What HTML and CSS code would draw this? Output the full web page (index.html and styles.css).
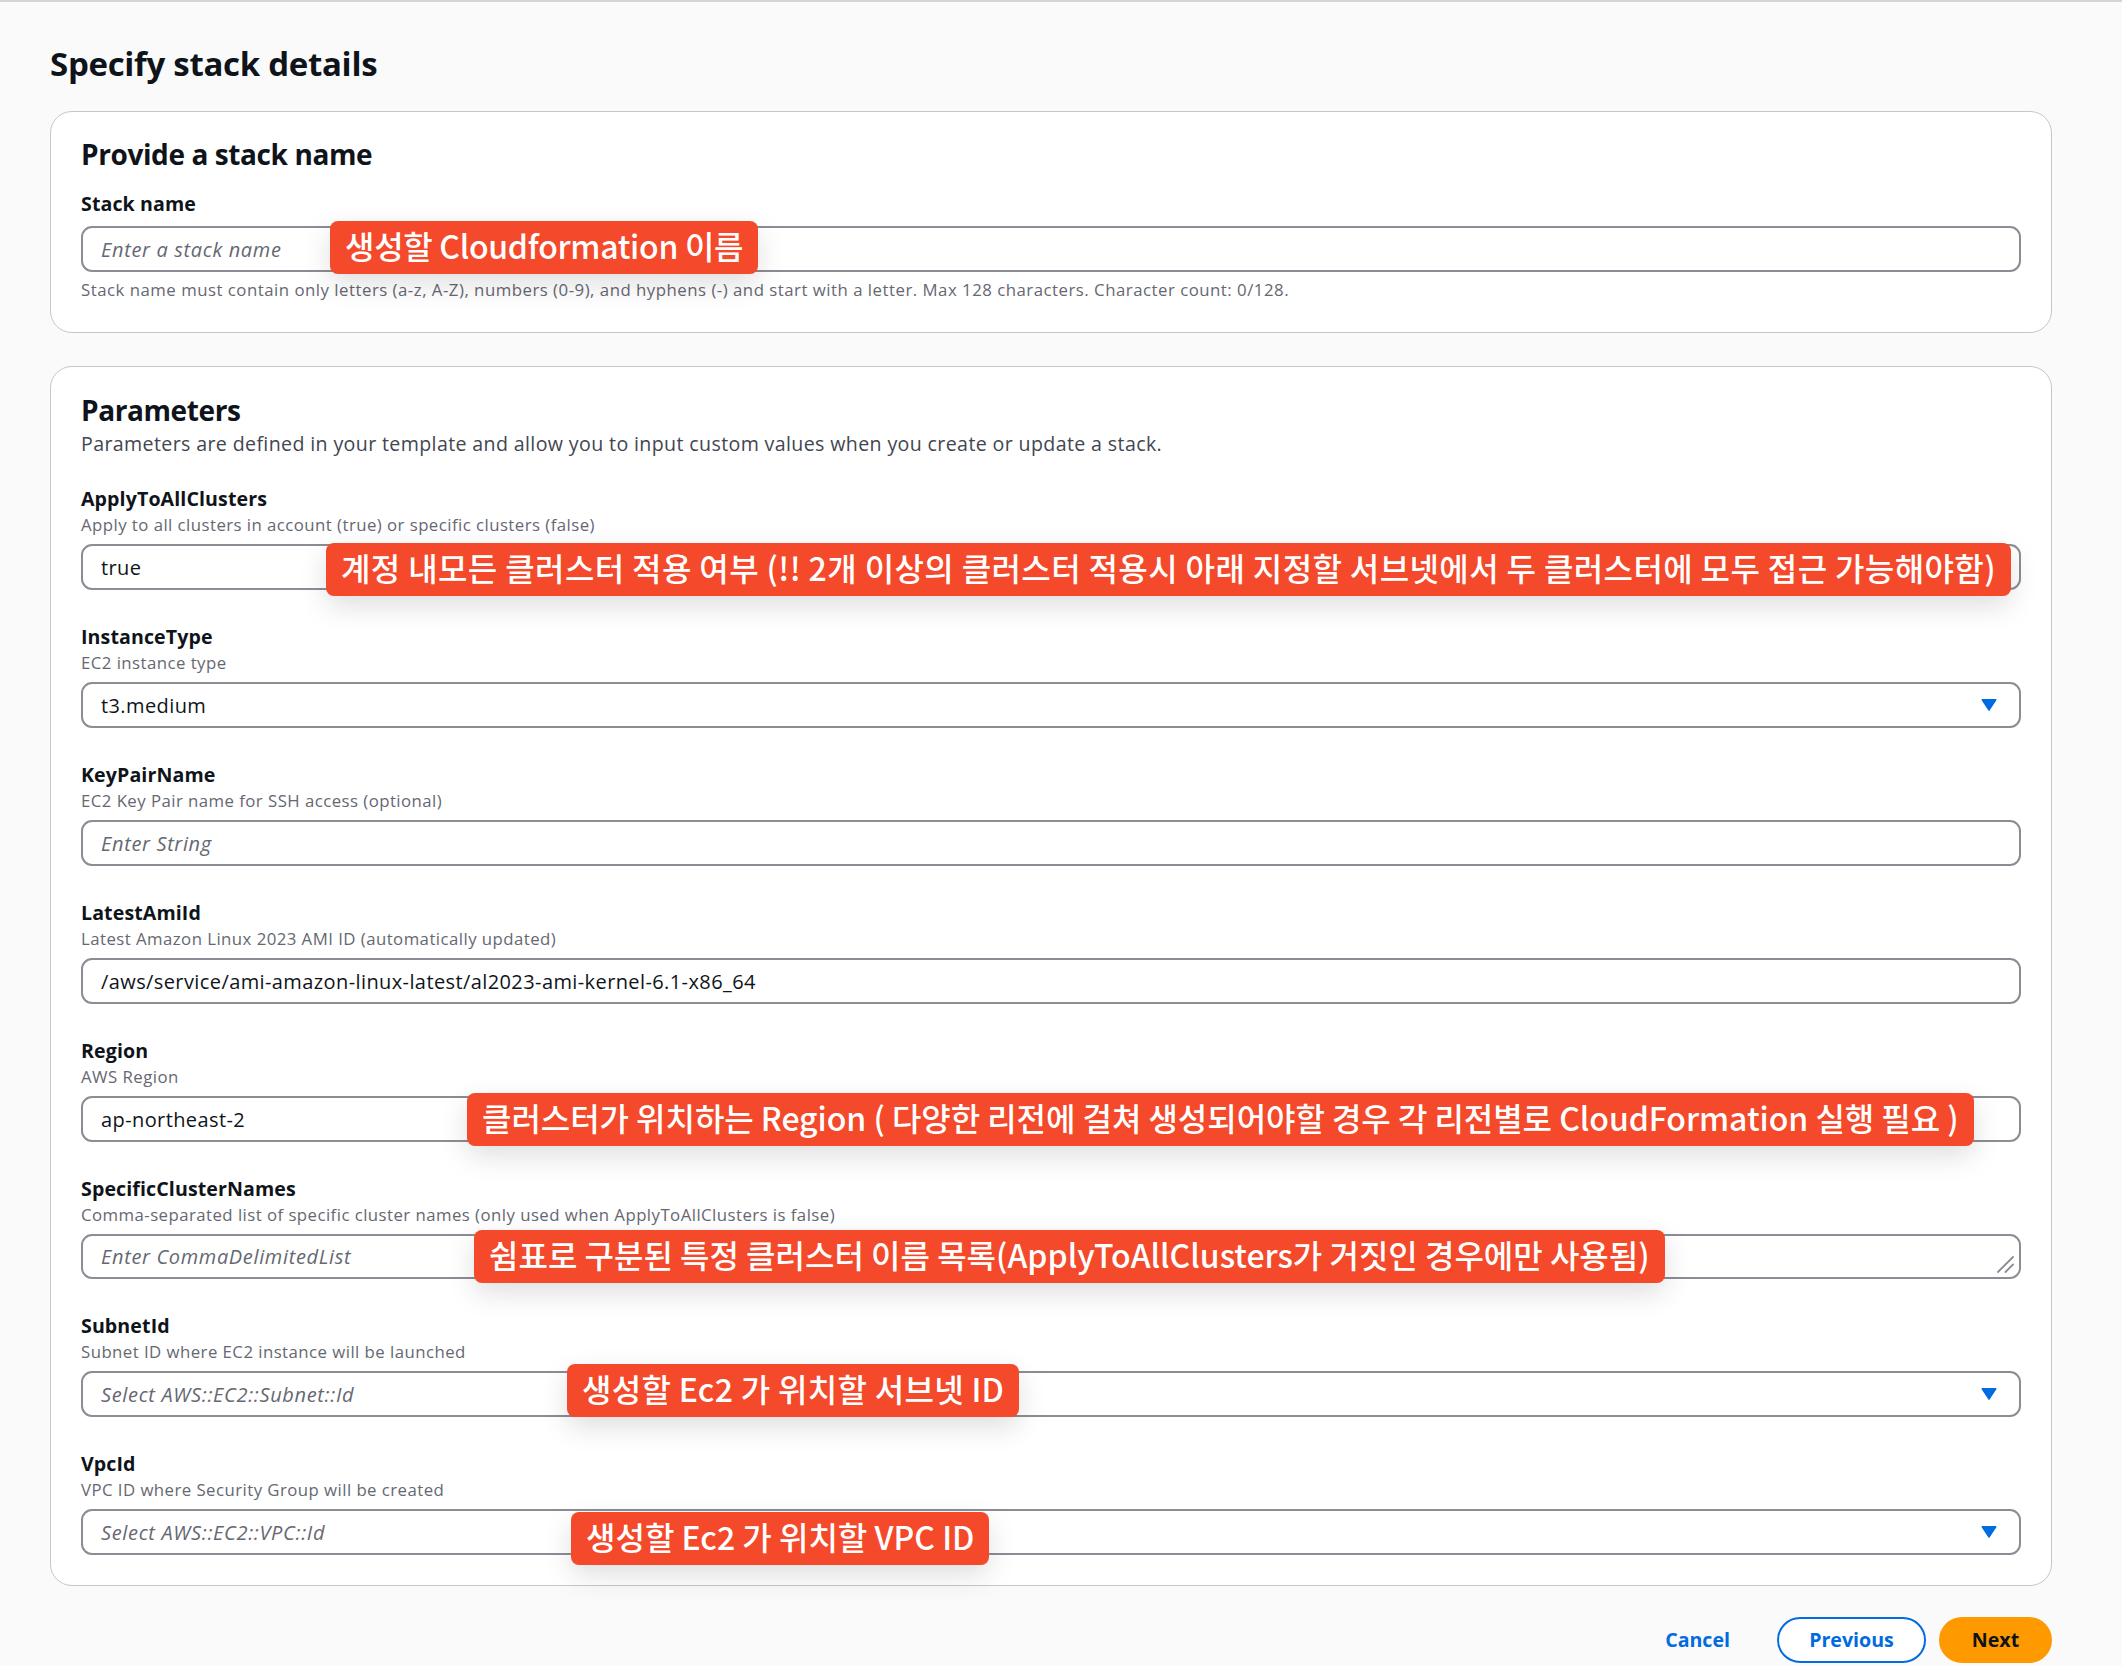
FILE: index.html
```html
<!DOCTYPE html>
<html lang="en">
<head>
<meta charset="utf-8">
<title>Specify stack details</title>
<link rel="stylesheet" href="styles.css">
</head>
<body>
<main class="page">
  <h1 class="title">Specify stack details</h1>

  <section class="card card-name">
    <h2 class="card-title">Provide a stack name</h2>
    <div class="field field-first">
      <div class="label">Stack name</div>
      <div class="control">
        <div class="input placeholder">Enter a stack name</div>
        <div class="note note-1">생성할 Cloudformation 이름</div>
      </div>
      <div class="constraint">Stack name must contain only letters (a-z, A-Z), numbers (0-9), and hyphens (-) and start with a letter. Max 128 characters. Character count: 0/128.</div>
    </div>
  </section>

  <section class="card card-params">
    <h2 class="card-title">Parameters</h2>
    <p class="card-desc">Parameters are defined in your template and allow you to input custom values when you create or update a stack.</p>

    <div class="fields">
      <div class="field">
        <div class="label">ApplyToAllClusters</div>
        <div class="desc">Apply to all clusters in account (true) or specific clusters (false)</div>
        <div class="control">
          <div class="input">true</div>
          <div class="note note-2">계정 내모든 클러스터 적용 여부 (!! 2개 이상의 클러스터 적용시 아래 지정할 서브넷에서 두 클러스터에 모두 접근 가능해야함)</div>
        </div>
      </div>

      <div class="field">
        <div class="label">InstanceType</div>
        <div class="desc">EC2 instance type</div>
        <div class="control">
          <div class="input select"><span>t3.medium</span><svg class="caret" width="16" height="12" viewBox="0 0 16 12"><path d="M1.2 0.8 H14.8 L8 11.2 Z" fill="#006ce0" stroke="#006ce0" stroke-width="1.4" stroke-linejoin="round"/></svg></div>
        </div>
      </div>

      <div class="field">
        <div class="label">KeyPairName</div>
        <div class="desc">EC2 Key Pair name for SSH access (optional)</div>
        <div class="control">
          <div class="input placeholder">Enter String</div>
        </div>
      </div>

      <div class="field">
        <div class="label">LatestAmiId</div>
        <div class="desc">Latest Amazon Linux 2023 AMI ID (automatically updated)</div>
        <div class="control">
          <div class="input">/aws/service/ami-amazon-linux-latest/al2023-ami-kernel-6.1-x86_64</div>
        </div>
      </div>

      <div class="field">
        <div class="label">Region</div>
        <div class="desc">AWS Region</div>
        <div class="control">
          <div class="input">ap-northeast-2</div>
          <div class="note note-3">클러스터가 위치하는 Region ( 다양한 리전에 걸쳐 생성되어야할 경우 각 리전별로 CloudFormation 실행 필요 )</div>
        </div>
      </div>

      <div class="field">
        <div class="label">SpecificClusterNames</div>
        <div class="desc">Comma-separated list of specific cluster names (only used when ApplyToAllClusters is false)</div>
        <div class="control">
          <div class="input textarea placeholder"><span>Enter CommaDelimitedList</span><svg class="resize" width="18" height="18" viewBox="0 0 18 18"><path d="M16 2 L1 17 M16 9.5 L8.5 17" stroke="#8c8c94" stroke-width="1.8" stroke-linecap="round"/></svg></div>
          <div class="note note-4">쉼표로 구분된 특정 클러스터 이름 목록(ApplyToAllClusters가 거짓인 경우에만 사용됨)</div>
        </div>
      </div>

      <div class="field">
        <div class="label">SubnetId</div>
        <div class="desc">Subnet ID where EC2 instance will be launched</div>
        <div class="control">
          <div class="input select placeholder"><span>Select AWS::EC2::Subnet::Id</span><svg class="caret" width="16" height="12" viewBox="0 0 16 12"><path d="M1.2 0.8 H14.8 L8 11.2 Z" fill="#006ce0" stroke="#006ce0" stroke-width="1.4" stroke-linejoin="round"/></svg></div>
          <div class="note note-5">생성할 Ec2 가 위치할 서브넷 ID</div>
        </div>
      </div>

      <div class="field">
        <div class="label">VpcId</div>
        <div class="desc">VPC ID where Security Group will be created</div>
        <div class="control">
          <div class="input select placeholder"><span>Select AWS::EC2::VPC::Id</span><svg class="caret" width="16" height="12" viewBox="0 0 16 12"><path d="M1.2 0.8 H14.8 L8 11.2 Z" fill="#006ce0" stroke="#006ce0" stroke-width="1.4" stroke-linejoin="round"/></svg></div>
          <div class="note note-6">생성할 Ec2 가 위치할 VPC ID</div>
        </div>
      </div>
    </div>
  </section>

  <div class="actions">
    <span class="btn-link">Cancel</span>
    <span class="btn btn-normal">Previous</span>
    <span class="btn btn-primary">Next</span>
  </div>
</main>
</body>
</html>
```

FILE: styles.css
```css
* { box-sizing: border-box; }

html, body {
  margin: 0;
  padding: 0;
}

body {
  width: 2122px;
  height: 1666px;
  overflow: hidden;
  background: #fafafa;
  border-top: 2px solid #d3d3d8;
  font-family: "Open Sans", "Noto Sans", "Liberation Sans", sans-serif;
  color: #0f141a;
}

.page {
  width: 2002px;
  margin-left: 50px;
}

.title {
  margin: 41px 0 26px;
  font-size: 33px;
  line-height: 42px;
  font-weight: 700;
  letter-spacing: -0.3px;
}

.card {
  background: #ffffff;
  border: 1px solid #c6c6cd;
  border-radius: 22px;
  padding: 24px 30px 31px;
}

.card-params {
  margin-top: 33px;
  padding-top: 25px;
  padding-bottom: 30px;
}

.card-title {
  margin: 0;
  font-size: 28px;
  line-height: 36px;
  font-weight: 700;
  letter-spacing: -0.4px;
}

.card-desc {
  margin: 2px 0 0;
  font-size: 19.6px;
  line-height: 28px;
  letter-spacing: 0.37px;
  color: #424650;
}

.fields {
  margin-top: 24.6px;
  display: flex;
  flex-direction: column;
  gap: 30.6px;
}

.field-first {
  margin-top: 15.5px;
}

.label {
  font-size: 19.6px;
  line-height: 31px;
  font-weight: 700;
  letter-spacing: 0.1px;
}

.desc {
  font-size: 16.8px;
  line-height: 22.4px;
  letter-spacing: 0.45px;
  color: #656871;
}

.control {
  position: relative;
  margin-top: 8px;
}

.field-first .control {
  margin-top: 7.5px;
}

.input {
  height: 46px;
  border: 2px solid #8c8c94;
  border-radius: 11px;
  background: #ffffff;
  padding: 0 18px;
  display: flex;
  align-items: center;
  font-size: 20px;
  letter-spacing: 0.4px;
  color: #0f141a;
  white-space: nowrap;
}

.input.placeholder {
  color: #656871;
  font-style: italic;
  letter-spacing: 0.65px;
}

.input.select,
.input.textarea {
  justify-content: space-between;
}

.caret {
  margin-right: 4px;
  flex: none;
}

.input.textarea {
  height: 45px;
  padding-right: 4px;
}

.resize {
  align-self: flex-end;
  margin-bottom: 4px;
  flex: none;
}

.constraint {
  margin-top: 7px;
  font-size: 16.8px;
  line-height: 22px;
  letter-spacing: 0.5px;
  color: #656871;
}

.note {
  position: absolute;
  padding: 4px 15px 8px;
  background: #f4492a;
  color: #ffffff;
  border-radius: 8px;
  font-family: "Noto Sans CJK KR", "Noto Sans", sans-serif;
  font-size: 32px;
  line-height: 41px;
  font-weight: 500;
  letter-spacing: 0;
  white-space: nowrap;
  box-shadow: 0 10px 28px rgba(0, 0, 0, 0.13);
}

.note-1 { left: 249px; top: -5px; letter-spacing: -0.3px; }
.note-2 { left: 245px; top: -1px; letter-spacing: 0.38px; }
.note-3 { left: 386px; top: -3px; letter-spacing: -0.05px; }
.note-4 { left: 393px; top: -4px; }
.note-5 { left: 486px; top: -7px; letter-spacing: 0.3px; }
.note-6 { left: 490px; top: 3px; }

.actions {
  margin-top: 31px;
  display: flex;
  justify-content: flex-end;
  align-items: center;
}

.btn-link,
.btn {
  font-size: 19.6px;
  font-weight: 700;
  line-height: 42px;
}

.btn-link {
  color: #006ce0;
  margin-right: 47px;
}

.btn {
  height: 46px;
  border-radius: 23px;
  border: 2px solid transparent;
  display: inline-flex;
  align-items: center;
  justify-content: center;
}

.btn-normal {
  width: 149px;
  border-color: #006ce0;
  color: #006ce0;
  background: #ffffff;
  margin-right: 13px;
}

.btn-primary {
  width: 113px;
  background: #ff9900;
  border-color: #ff9900;
  color: #0f141a;
}
```
